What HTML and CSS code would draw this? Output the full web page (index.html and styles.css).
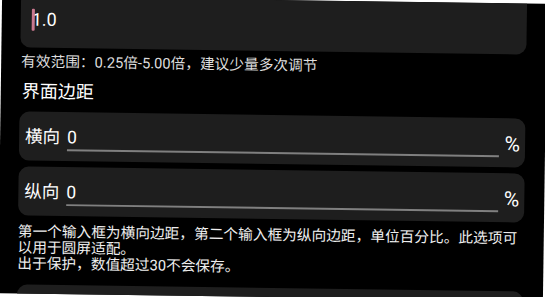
FILE: index.html
```html
<!DOCTYPE html>
<html lang="zh-CN">
<head>
    <meta charset="UTF-8">
    <meta name="viewport" content="width=device-width, initial-scale=1.0">
    <title>设置</title>
    <link rel="stylesheet" href="styles.css">
</head>
<body>
    <div class="screen">
        <div class="card top-card">
            <div class="value"><span class="cursor"></span>1.0</div>
        </div>
        <p class="hint">有效范围：0.25倍-5.00倍，建议少量多次调节</p>

        <h2 class="title">界面边距</h2>

        <div class="card field-card">
            <span class="label">横向</span>
            <div class="field">0</div>
            <span class="unit">%</span>
        </div>
        <div class="card field-card">
            <span class="label">纵向</span>
            <div class="field">0</div>
            <span class="unit">%</span>
        </div>
        <p class="desc">第一个输入框为横向边距，第二个输入框为纵向边距，单位百分比。此选项可以用于圆屏适配。<br>出于保护，数值超过30不会保存。</p>

        <div class="card bottom-card"></div>
    </div>
</body>
</html>
```

FILE: styles.css
```css
* {
    margin: 0;
    padding: 0;
    box-sizing: border-box;
}

html {
    background-color: #ffffff;
}

body {
    color: #ffffff;
    font-family: Roboto, "Noto Sans CJK SC", sans-serif;
    overflow: hidden;
    height: 297px;
}

/* the reference is a slightly tilted capture */
.screen {
    width: 545px;
    height: 297px;
    overflow: hidden;
    background-color: #000000;
    padding: 0 20px 0 19px;
    transform: rotate(0.8deg);
}

.card {
    background-color: #1e1e1e;
    border-radius: 10px;
}

.top-card {
    height: 51px;
    border-radius: 0 0 10px 10px;
    padding: 10px 11px 0;
}

.top-card .value {
    font-size: 18px;
    line-height: 26px;
    position: relative;
}

.cursor {
    position: absolute;
    left: 0;
    top: 2px;
    width: 3px;
    height: 22px;
    background-color: #c9788f;
    border-radius: 1px;
}

.hint {
    font-size: 14.7px;
    line-height: 20px;
    color: #dddddd;
    margin-top: 4px;
    padding-left: 1px;
}

.title {
    font-size: 18px;
    font-weight: normal;
    line-height: 26px;
    margin-top: 7px;
    padding-left: 2px;
}

.field-card {
    display: flex;
    align-items: flex-start;
    height: 49px;
    margin-top: 7px;
    padding: 0 5px 0 6px;
}

.field-card + .field-card {
    margin-top: 6px;
}

.label {
    font-size: 17.5px;
    line-height: 24px;
    margin-top: 13px;
}

.field {
    flex: 1;
    margin: 13px 0 0 7px;
    font-size: 17.5px;
    line-height: 24px;
    border-bottom: 2px solid #808080;
}

.unit {
    font-size: 21px;
    line-height: 24px;
    margin: 14px 0 0 6px;
}

.desc {
    font-size: 14.7px;
    line-height: 16px;
    color: #eeeeee;
    margin-top: 8px;
}

.bottom-card {
    height: 40px;
    margin-top: 13px;
}
```
